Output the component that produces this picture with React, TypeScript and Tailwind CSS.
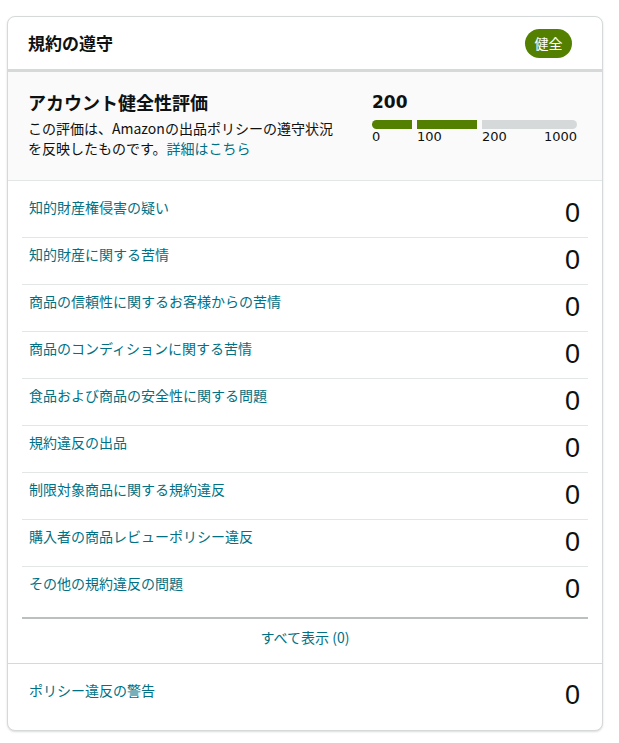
import React from "react";

const rows = [
  "知的財産権侵害の疑い",
  "知的財産に関する苦情",
  "商品の信頼性に関するお客様からの苦情",
  "商品のコンディションに関する苦情",
  "食品および商品の安全性に関する問題",
  "規約違反の出品",
  "制限対象商品に関する規約違反",
  "購入者の商品レビューポリシー違反",
  "その他の規約違反の問題",
];

const jp = { fontFamily: '"Noto Sans CJK JP", "Noto Sans", sans-serif' };
const num = { fontFamily: '"Liberation Sans", Arial, sans-serif' };
const dv = { fontFamily: '"DejaVu Sans", Verdana, sans-serif' };

export default function App() {
  return (
    <div className="min-h-[743px] w-[619px] bg-white pt-4 pl-[7px]" style={jp}>
      <div className="w-[596px] rounded-lg border border-[#d5d9d9] bg-white shadow-[0_1px_2px_rgba(15,17,17,0.15)] overflow-hidden">
        {/* Header */}
        <div className="flex h-[52px] items-center justify-between pl-5 pr-[30px]">
          <div className="text-[17px] font-bold leading-6 text-[#0f1111]">規約の遵守</div>
          <div className="flex h-[29px] w-[47px] items-center justify-center rounded-full bg-[#538000] text-[14px] text-white">
            健全
          </div>
        </div>
        <div className="h-[3px] bg-[#d5d9d9]" />

        {/* Health rating */}
        <div className="flex border-b border-[#e3e6e6] bg-[#fafafa] pl-5 pt-[18px] pb-[22px]">
          <div className="w-[318px]">
            <div className="text-[18px] font-bold leading-6 text-[#0f1111]">アカウント健全性評価</div>
            <div className="mt-[5px] text-[14px] leading-[19.5px] text-[#0f1111]">
              この評価は、Amazonの出品ポリシーの遵守状況
              <br />
              を反映したものです。<span className="text-[#007185]">詳細はこちら</span>
            </div>
          </div>
          <div className="ml-[26px] w-[205px]">
            <div className="text-[17px] font-bold leading-6 text-[#0f1111]" style={dv}>
              200
            </div>
            <div className="mt-[6px] flex h-[9px] gap-[5px]">
              <div className="w-[40px] rounded-l-full bg-[#538000]" />
              <div className="w-[60px] bg-[#538000]" />
              <div className="flex-1 rounded-r-full bg-[#d5d9d9]" />
            </div>
            <div className="flex gap-[5px] text-[13px] leading-4 text-[#0f1111]" style={dv}>
              <div className="w-[40px]">0</div>
              <div className="w-[60px]">100</div>
              <div className="flex flex-1 justify-between">
                <span>200</span>
                <span>1000</span>
              </div>
            </div>
          </div>
        </div>

        {/* List */}
        <div className="px-[14px] pt-[10px]">
          {rows.map((r, i) => (
            <div
              key={r}
              className={
                i < rows.length - 1
                  ? "flex items-start justify-between border-b border-[#e3e6e6] pl-[7px] pr-[8px] pt-[6px] pb-[8px]"
                  : "flex items-start justify-between pl-[7px] pr-[8px] pt-[6px] pb-[12px]"
              }
            >
              <span className="text-[14px] leading-5 text-[#007185]">{r}</span>
              <span className="text-[27px] leading-8 text-[#0f1111]" style={num}>
                0
              </span>
            </div>
          ))}
          <div className="h-[46px] border-t-2 border-[#bbbfbf] pt-[8px] text-center text-[14px] leading-5 text-[#007185]">
            すべて表示 (0)
          </div>
        </div>

        {/* Policy warnings */}
        <div className="flex h-[67px] items-start justify-between border-t border-[#d5d9d9] pl-[21px] pr-[22px] pt-[16px]">
          <span className="text-[14px] leading-5 text-[#007185]">ポリシー違反の警告</span>
          <span className="-mt-px text-[27px] leading-8 text-[#0f1111]" style={num}>
            0
          </span>
        </div>
      </div>
    </div>
  );
}
